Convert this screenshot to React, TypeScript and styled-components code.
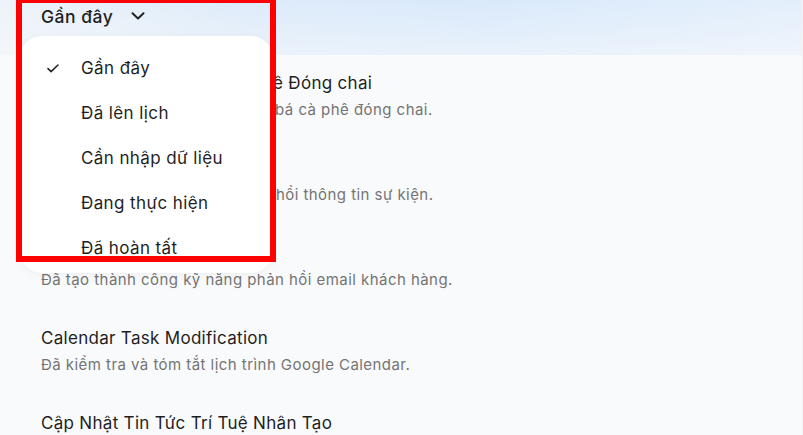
import React from 'react';
import styled, { createGlobalStyle } from 'styled-components';

const GlobalStyle = createGlobalStyle`
  html, body {
    margin: 0;
    padding: 0;
    background: #f9fafb;
  }
  body {
    font-family: Inter, "Noto Sans", Arial, sans-serif;
    color: #1f1f1f;
  }
`;

type Task = { title: string; summary: string };

const tasks: Task[] = [
  { title: 'Phân Tích Thị Trường Cà Phê Đóng chai', summary: 'Đã tạo kế hoạch tiếp thị quảng bá cà phê đóng chai.' },
  { title: 'Phản Hồi Sự Kiện', summary: 'Đã tạo biểu mẫu thu thập phản hồi thông tin sự kiện.' },
  { title: 'Kỹ Năng Phản Hồi Email', summary: 'Đã tạo thành công kỹ năng phản hồi email khách hàng.' },
  { title: 'Calendar Task Modification', summary: 'Đã kiểm tra và tóm tắt lịch trình Google Calendar.' },
  { title: 'Cập Nhật Tin Tức Trí Tuệ Nhân Tạo', summary: 'Đã tổng hợp tin tức trí tuệ nhân tạo mới nhất.' },
];

const filters = ['Gần đây', 'Đã lên lịch', 'Cần nhập dữ liệu', 'Đang thực hiện', 'Đã hoàn tất'];

export default function App() {
  return (
    <>
      <GlobalStyle />
      <Page>
        <Band />
        <Content>
          <FilterButton>
            Gần đây
            <svg width="14" height="8" viewBox="0 0 14 8" fill="none">
              <path d="M1.5 1.2 7 6.5l5.5-5.3" stroke="#1f1f1f" strokeWidth="1.9" strokeLinecap="round" strokeLinejoin="round" />
            </svg>
          </FilterButton>
          <TaskList>
            {tasks.map((t) => (
              <TaskItem key={t.title}>
                <TaskTitle>{t.title}</TaskTitle>
                <TaskSummary>{t.summary}</TaskSummary>
              </TaskItem>
            ))}
          </TaskList>
        </Content>

        <Menu>
          {filters.map((f, i) => (
            <MenuItem key={f}>
              <CheckSlot>
                {i === 0 && (
                  <svg width="12" height="9" viewBox="0 0 12 9" fill="none">
                    <path d="M1 4.6 4.1 7.6 11 1" stroke="#1f1f1f" strokeWidth="1.5" strokeLinecap="round" strokeLinejoin="round" />
                  </svg>
                )}
              </CheckSlot>
              {f}
            </MenuItem>
          ))}
        </Menu>

        <Highlight />
      </Page>
    </>
  );
}

const Page = styled.div`
  position: relative;
  width: 803px;
  height: 435px;
  overflow: hidden;
  background: #f9fafb;
  border-right: 1px solid #f1f3f5;
  box-sizing: border-box;
`;

const Band = styled.div`
  position: absolute;
  top: 0;
  left: 0;
  right: 0;
  height: 55px;
  background: linear-gradient(180deg, rgba(255, 255, 255, 0) 0%, rgba(249, 250, 251, 0.5) 100%),
    linear-gradient(90deg, #edf3f9 0%, #deebfa 30%, #d9e9fb 60%, #e4effb 100%);
`;

const Content = styled.div`
  position: relative;
  padding: 0 0 0 41px;
`;

const FilterButton = styled.div`
  display: flex;
  align-items: center;
  gap: 18px;
  height: 32px;
  font-size: 17.5px;
  font-weight: 500;
  letter-spacing: 0.5px;
  color: #1f1f1f;
`;

const TaskList = styled.div`
  display: flex;
  flex-direction: column;
  gap: 35px;
  margin-top: 39px;
`;

const TaskItem = styled.div`
  display: flex;
  flex-direction: column;
  gap: 4px;
`;

const TaskTitle = styled.div`
  font-size: 17px;
  line-height: 24px;
  letter-spacing: 0.3px;
  color: #1f1f1f;
  white-space: nowrap;
`;

const TaskSummary = styled.div`
  font-size: 15px;
  line-height: 22px;
  letter-spacing: 0.45px;
  color: #747474;
  white-space: nowrap;
`;

const Menu = styled.div`
  position: absolute;
  top: 36px;
  left: 20px;
  width: 253px;
  height: 237px;
  box-sizing: border-box;
  background: #ffffff;
  border-radius: 22px;
  box-shadow: 0 2px 10px rgba(60, 64, 67, 0.06);
  padding: 20px 0 0 0;
  display: flex;
  flex-direction: column;
  gap: 21px;
`;

const MenuItem = styled.div`
  display: flex;
  align-items: center;
  height: 24px;
  font-size: 17px;
  letter-spacing: 0.4px;
  color: #1f1f1f;
  white-space: nowrap;
`;

const CheckSlot = styled.span`
  display: flex;
  align-items: center;
  width: 61px;
  padding-left: 27px;
  box-sizing: border-box;
`;

const Highlight = styled.div`
  position: absolute;
  top: -3px;
  left: 16px;
  width: 260px;
  height: 265px;
  box-sizing: border-box;
  border: 6px solid #fe0000;
`;
